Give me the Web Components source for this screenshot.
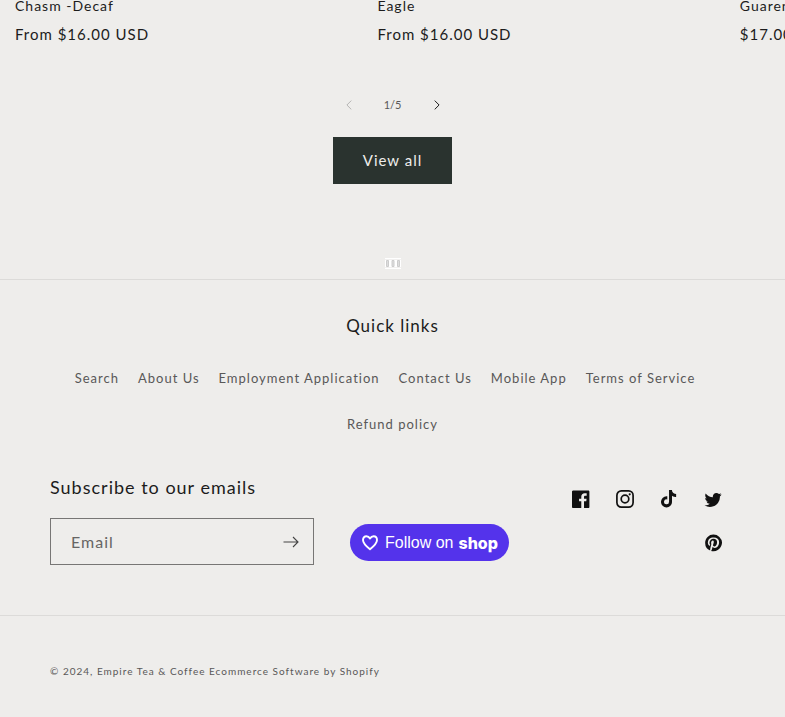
<!DOCTYPE html>
<html lang="en">
<head>
<meta charset="utf-8">
<meta name="viewport" content="width=device-width, initial-scale=1">
<title>Empire Tea &amp; Coffee</title>
<style>
body{margin:0;background:#eeedeb;color:#1c1c1c;font-family:Lato,"Open Sans",sans-serif;letter-spacing:1px;overflow-x:hidden;
--ink:#1c1c1c;--soft:#595858;--line:#dcdbd9}
</style>
</head>
<body>
<store-page></store-page>
<script>
const define = (name, html, setup) => customElements.define(name, class extends HTMLElement {
  constructor() {
    super();
    this.attachShadow({mode: 'open'}).innerHTML = html;
  }
  connectedCallback() { if (setup) setup(this, this.shadowRoot); }
});

define('product-card', `<style>
:host{display:block}
h3{margin:0;font-size:14px;line-height:18px;font-weight:400}
h3 a{color:inherit;text-decoration:none}
p{margin:8px 0 0;font-size:15px;line-height:22px}
</style><h3><a href="#"><slot></slot></a></h3><p><slot name="price"></slot></p>`);

define('product-slider', `<style>
:host{display:block;overflow:hidden}
.track{display:grid;grid-auto-flow:column;grid-auto-columns:48%;padding:0 15px;margin-top:-3px;white-space:nowrap}
.controls{display:flex;justify-content:center;align-items:center;margin-top:38px;height:44px}
button{width:44px;height:44px;padding:0;border:0;background:none;color:var(--ink);display:flex;align-items:center;justify-content:center}
button:disabled{color:#b5b4b3}
.count{width:44px;text-align:center;font-size:11px;line-height:16px;color:var(--soft);letter-spacing:0}
.all{display:flex;justify-content:center;margin-top:10px}
.all a{background:#2a332f;color:#eeedeb;text-decoration:none;font-size:15px;line-height:18px;padding:14px 30px 15px}
</style>
<div class="track"><slot></slot></div>
<div class="controls">
<button disabled aria-label="Previous"><svg width="6" height="10" viewBox="0 0 6 10" fill="none" stroke="currentColor"><path d="M5.3.6.9 5l4.4 4.4"/></svg></button>
<span class="count">1/5</span>
<button aria-label="Next"><svg width="6" height="10" viewBox="0 0 6 10" fill="none" stroke="currentColor"><path d="M.7.6 5.1 5 .7 9.4"/></svg></button>
</div>
<div class="all"><a href="#">View all</a></div>`);

define('tiny-mark', `<style>
:host{display:flex;justify-content:center;margin-top:74px;height:21px}
</style><svg width="16" height="11" viewBox="0 0 16 11" aria-hidden="true"><path fill="#fff" d="M0 0h16v11H0z"/><path d="M0 1.500h16M0 9.500h16" stroke="#f1f0ef"/><path d="M1.500 2.500h2v6h-2zM7 2.500h2v6H7zM12.500 2.500h2v6h-2z" fill="#ddd" stroke="#ccc"/></svg>`);

define('quick-links', `<style>
:host{display:block;text-align:center}
h2{margin:0;font-size:17px;line-height:22px;font-weight:400}
nav{margin-top:18px;display:flex;flex-wrap:wrap;justify-content:center;column-gap:4px}
::slotted(a){display:block;padding-right:15px;color:var(--soft);text-decoration:none;font-size:13px;line-height:46px}
::slotted(a:last-child){padding-right:0}
</style><h2>Quick links</h2><nav aria-label="Quick links"><slot></slot></nav>`);

define('email-signup', `<style>
:host{display:block;min-width:0}
h2{margin:0 0 20px;font-size:18px;line-height:22px;font-weight:400;white-space:nowrap}
form{display:flex;height:45px;border:1px solid #777675}
input{flex:1;min-width:0;border:0;background:none;padding:0 0 0 20px;font:inherit;font-size:16px;letter-spacing:inherit;color:var(--ink);outline:0}
input::placeholder{color:#666564;opacity:1}
button{width:44px;padding:0;border:0;background:none;color:#444;display:flex;align-items:center;justify-content:center}
</style><h2>Subscribe to our emails</h2>
<form><input type="email" placeholder="Email" aria-label="Email"><button type="button" aria-label="Subscribe"><svg width="16" height="12" viewBox="0 0 16 12" fill="none" stroke="currentColor" stroke-width="1.1"><path d="M.5 6h14.600M10 1l5 5-5 5"/></svg></button></form>`);

define('shop-follow', `<style>
:host{display:block;margin-bottom:4px}
button{display:flex;align-items:center;height:37px;padding:0 11px;border:0;border-radius:19px;background:#5433eb;color:#fff;font:16px/20px "Liberation Sans",Arial,sans-serif;white-space:nowrap}
svg{margin-right:6px;flex:none}
b{font:800 16px/20px Inter,sans-serif;margin-left:5px}
</style><button><svg width="18" height="17" viewBox="0 0 18 17" fill="none" stroke="currentColor" stroke-width="1.900" stroke-linejoin="round"><path d="M9 15.300C6.500 13.300 2 9.500 2 6 2 3.700 3.500 2.200 5.400 2.200 7.100 2.200 8.200 3.100 9 4.500 9.800 3.100 10.900 2.200 12.600 2.200c1.900 0 3.400 1.500 3.400 3.800 0 3.500-4.500 7.300-7 9.300Z"/></svg>Follow on<b>shop</b></button>`);

const icons = {
  Facebook: ['0 0 18 18', 18, 18, '<path d="M16.42.61c.27 0 .5.1.69.28.19.2.28.42.28.7v15.44c0 .27-.1.5-.28.69a.94.94 0 01-.7.28h-4.390v-6.700h2.250l.31-2.650h-2.560v-1.700c0-.4.1-.72.28-.93.18-.2.5-.32 1-.32h1.370V3.350c-.6-.06-1.270-.1-2.010-.1-1.010 0-1.830.3-2.450.9-.62.6-.93 1.440-.93 2.530v1.970H7.040v2.650h2.240V18H.98c-.28 0-.5-.1-.7-.28a.94.94 0 01-.28-.7V1.590c0-.27.1-.5.28-.69a.94.94 0 01.7-.28h15.440z"/>'],
  Instagram: ['0 0 18 18', 18, 18, '<g fill="none" stroke="currentColor" stroke-width="1.700"><rect x=".9" y=".9" width="16.200" height="16.200" rx="4.500"/><circle cx="9" cy="9" r="3.800"/></g><circle cx="13.700" cy="4.300" r="1.100"/>'],
  TikTok: ['0 0 16 18', 16, 18, '<path d="M8.020 0H11s-.17 3.820 4.130 4.100v2.950s-2.300.14-4.130-1.260l.03 6.100a5.520 5.520 0 11-5.510-5.520h.77V9.400a2.500 2.500 0 101.760 2.400L8.020 0z"/>'],
  Twitter: ['0 0 18 15', 18, 15, '<path d="M17.640 2.600a7.330 7.330 0 01-1.750 1.820c0 .05 0 .13.02.23l.02.23a9.970 9.970 0 01-1.690 5.540c-.57.85-1.240 1.620-2.020 2.280a9.090 9.090 0 01-2.820 1.600 10.230 10.230 0 01-8.900-.98c.34.02.61.04.83.04 1.640 0 3.100-.5 4.380-1.500a3.600 3.600 0 01-3.300-2.450A2.910 2.910 0 004 9.350a3.470 3.470 0 01-2.020-1.210 3.370 3.370 0 01-.8-2.220v-.03c.46.24.98.37 1.580.4a3.450 3.450 0 01-1.540-2.900c0-.61.14-1.200.45-1.790a9.680 9.680 0 003.200 2.600 10 10 0 004.080 1.070 3 3 0 01-.13-.8c0-.97.34-1.800 1.030-2.480A3.450 3.450 0 0112.400.96a3.490 3.490 0 012.540 1.100c.8-.15 1.540-.44 2.230-.85a3.400 3.400 0 01-1.540 1.940c.74-.1 1.400-.28 2.010-.54z"/>'],
  Pinterest: ['0 0 17 18', 17, 18, '<path d="M8.480.58a8.420 8.420 0 015.900 2.450 8.420 8.420 0 011.330 10.080 8.280 8.280 0 01-7.230 4.160 8.500 8.500 0 01-2.370-.32c.42-.68.7-1.290.85-1.800l.59-2.290c.14.28.41.52.8.73.4.2.8.31 1.240.31.87 0 1.650-.25 2.340-.75a4.870 4.870 0 001.600-2.050 7.300 7.300 0 00.56-2.930c0-1.300-.5-2.410-1.490-3.360a5.270 5.270 0 00-3.800-1.430c-.93 0-1.800.16-2.580.48A5.230 5.230 0 002.850 8.600c0 .75.14 1.410.43 1.980.28.56.7.96 1.270 1.200.1.04.19.04.26 0 .07-.03.12-.1.15-.2l.18-.68c.05-.15.02-.3-.11-.45a2.350 2.350 0 01-.57-1.630A3.960 3.960 0 018.600 4.800c1.090 0 1.940.3 2.540.89.61.6.92 1.370.92 2.320 0 .8-.11 1.540-.33 2.210a3.970 3.970 0 01-.93 1.620c-.4.4-.87.6-1.400.6-.43 0-.78-.15-1.060-.47-.27-.32-.36-.7-.26-1.130a111.140 111.140 0 01.47-1.600l.18-.73c.06-.26.09-.47.09-.65 0-.36-.1-.66-.28-.89-.2-.23-.47-.35-.83-.35-.45 0-.83.2-1.130.62-.3.41-.46.93-.46 1.560a4.100 4.100 0 00.18 1.150l.06.15c-.6 2.580-.95 4.100-1.080 4.540-.12.55-.16 1.200-.13 1.940a8.400 8.400 0 01-5-7.650c0-2.300.81-4.280 2.440-5.900A8.040 8.040 0 018.480.57z"/>']
};
define('social-link', `<style>
:host{display:block}
a{display:flex;width:44px;height:44px;align-items:center;justify-content:center;color:#111}
</style><a href="#"></a>`, (el, root) => {
  const name = el.getAttribute('network'), [box, w, h, art] = icons[name], a = root.querySelector('a');
  a.setAttribute('aria-label', name);
  a.innerHTML = `<svg width="${w}" height="${h}" viewBox="${box}" fill="currentColor">${art}</svg>`;
});

define('site-footer', `<style>
:host{display:block;margin:0;border-top:1px solid var(--line)}
.top{padding:35px 50px 50px}
.row{display:grid;grid-template-columns:minmax(0,264fr) minmax(0,158fr) minmax(0,191fr);gap:36px;align-items:end;margin-top:29px}
.social{display:flex;flex-wrap:wrap;justify-content:flex-end}
.legal{border-top:1px solid var(--line);padding:46px 50px 36px;font-size:10px;line-height:18px;color:var(--soft)}
.legal a{color:inherit;text-decoration:none}
</style>
<div class="top">
<quick-links><a href="#">Search</a><a href="#">About Us</a><a href="#">Employment Application</a><a href="#">Contact Us</a><a href="#">Mobile App</a><a href="#">Terms of Service</a><a href="#">Refund policy</a></quick-links>
<div class="row"><email-signup></email-signup><shop-follow></shop-follow>
<div class="social"><social-link network="Facebook"></social-link><social-link network="Instagram"></social-link><social-link network="TikTok"></social-link><social-link network="Twitter"></social-link><social-link network="Pinterest"></social-link></div></div>
</div>
<div class="legal">© 2024, <a href="#">Empire Tea &amp; Coffee</a> <a href="#">Ecommerce Software by Shopify</a></div>`);

define('store-page', `<style>:host{display:block}</style>
<product-slider>
<product-card>Chasm -Decaf<span slot="price">From $16.00 USD</span></product-card>
<product-card>Eagle<span slot="price">From $16.00 USD</span></product-card>
<product-card>Guaren<span slot="price">$17.00 USD</span></product-card>
</product-slider>
<tiny-mark></tiny-mark>
<site-footer></site-footer>`);
</script>
</body>
</html>
